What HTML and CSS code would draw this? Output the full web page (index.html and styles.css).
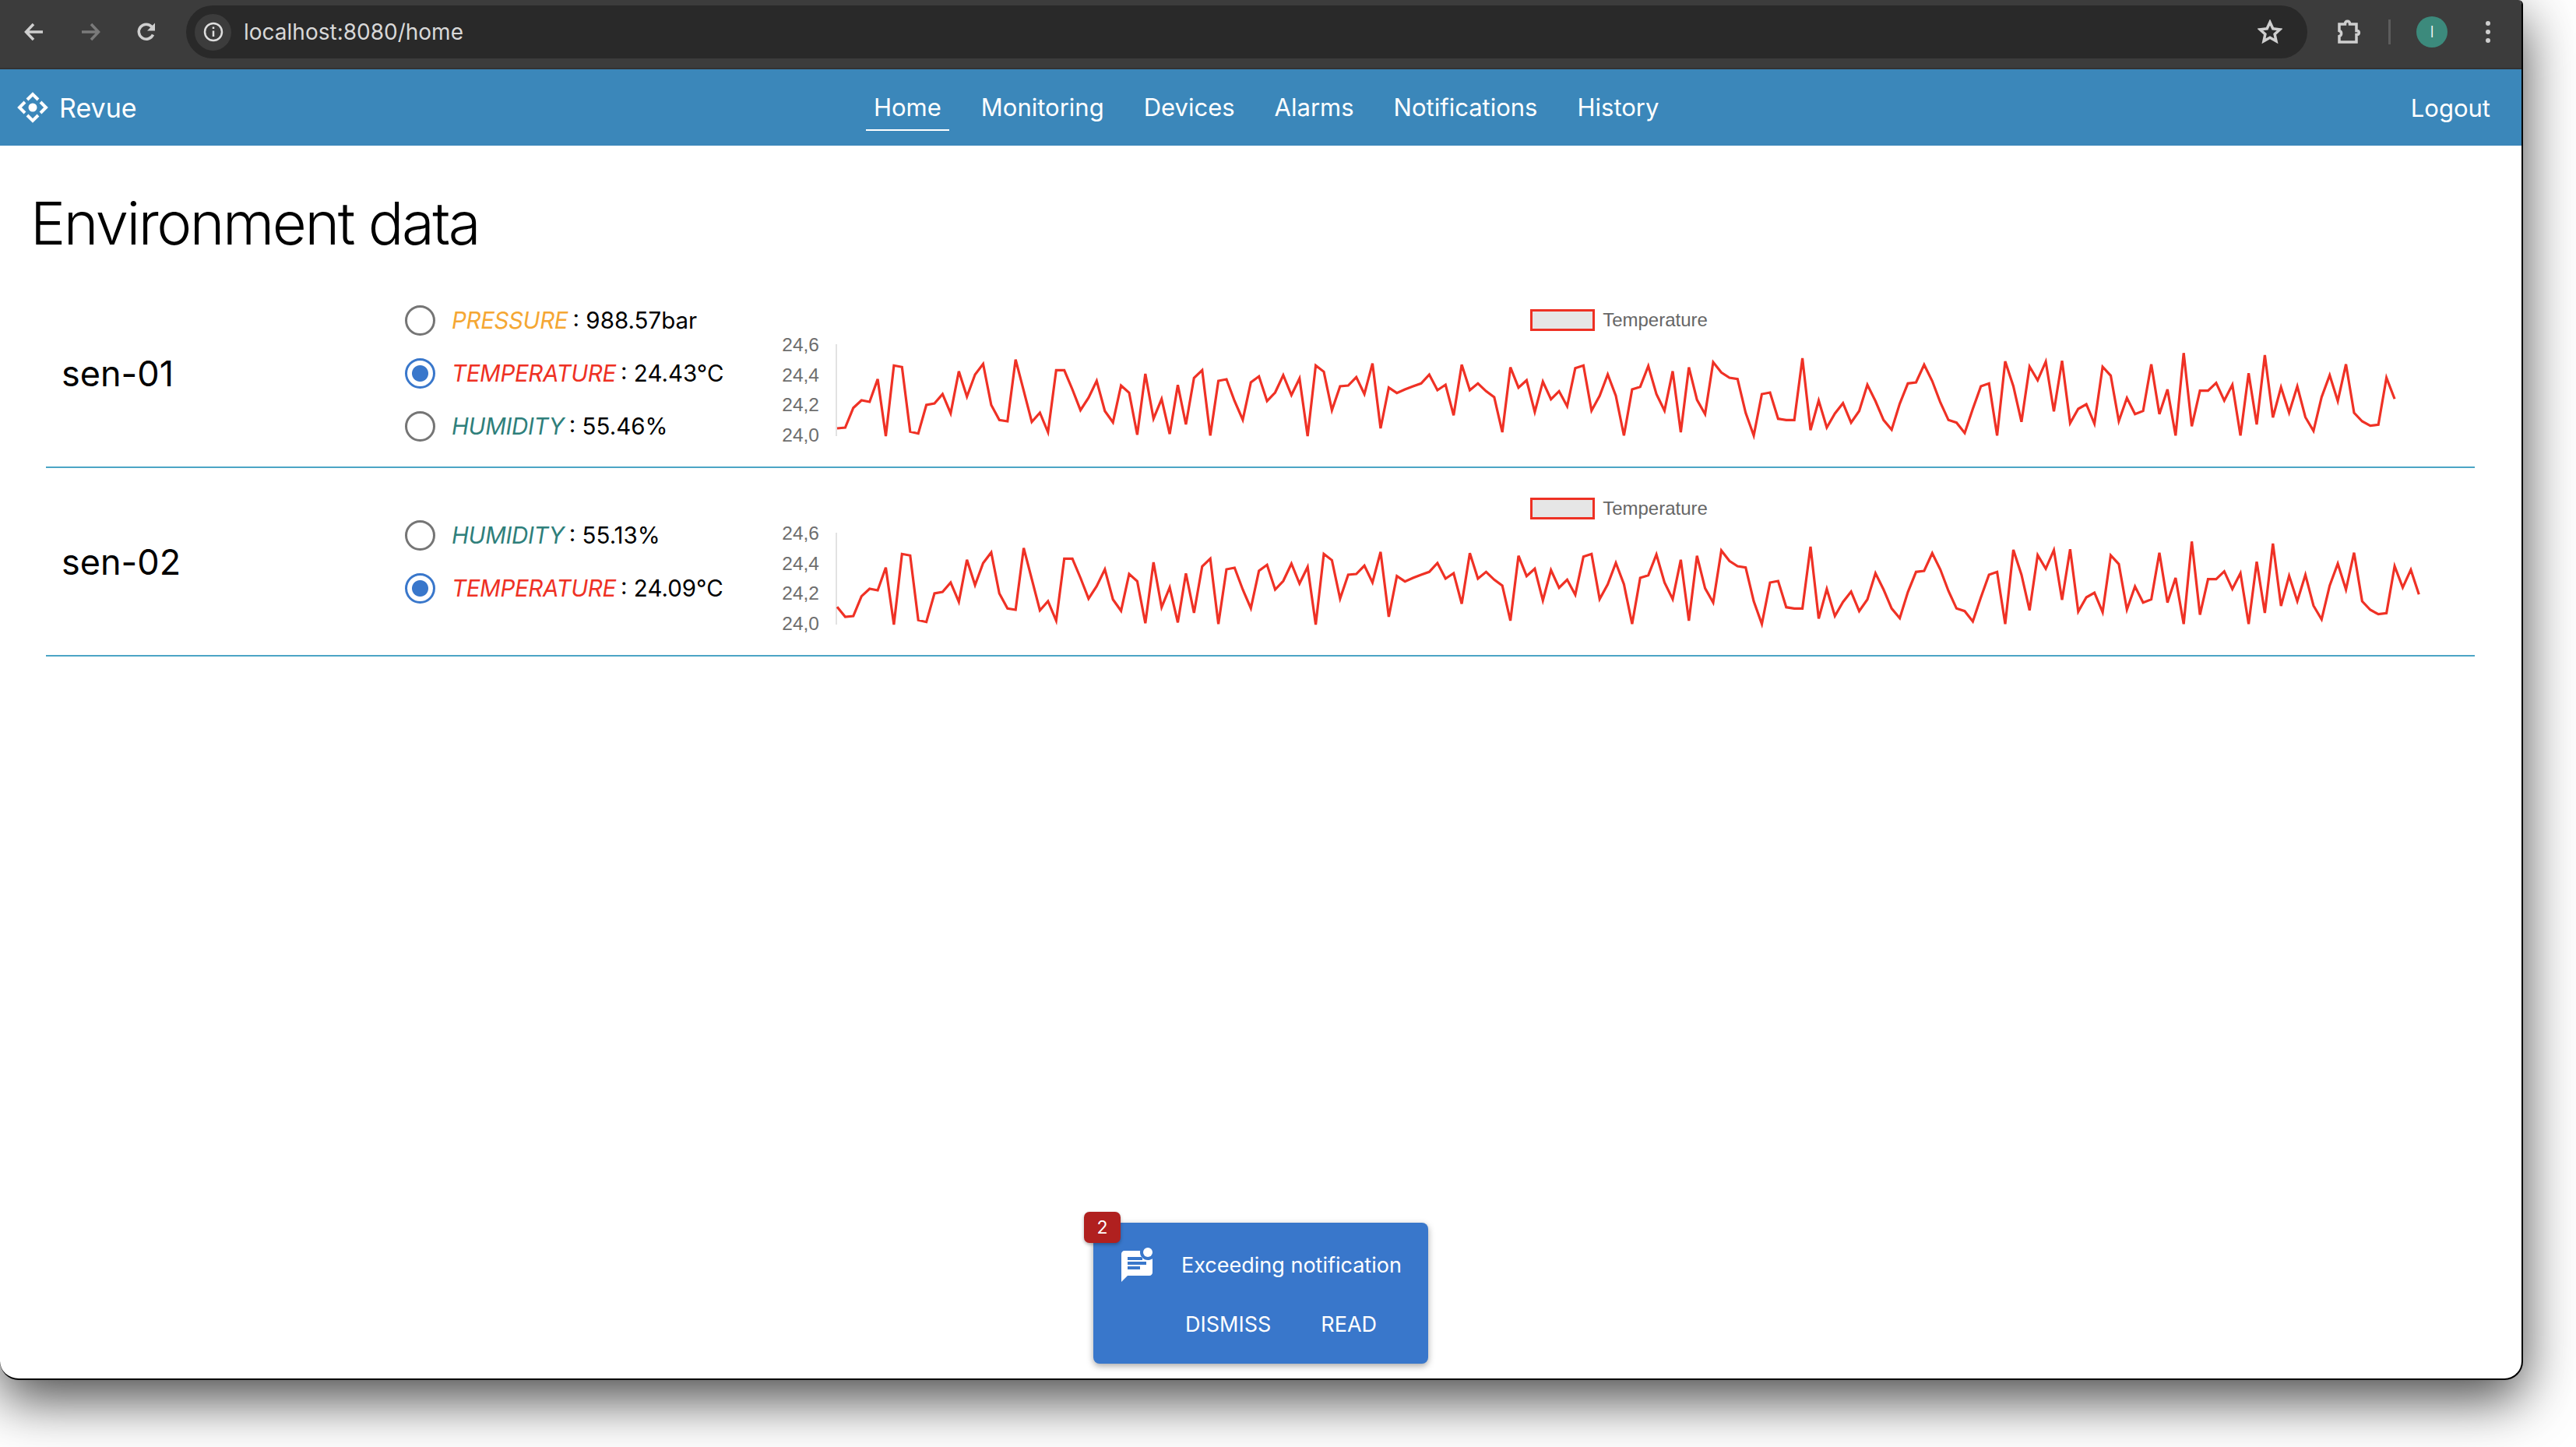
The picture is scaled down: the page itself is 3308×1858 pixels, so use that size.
FILE: index.html
```html
<!DOCTYPE html>
<html lang="en">
<head>
    <meta charset="UTF-8">
    <title>Revue</title>
    <link rel="stylesheet" href="styles.css">
</head>
<body>
    <div class="window">
        <div class="toolbar">
            <svg class="tool tool-back" viewBox="0 0 26 26"><path d="M24 13H3M12 3 2.500 13 12 23"/></svg>
            <svg class="tool tool-forward" viewBox="0 0 26 26"><path d="M2 13h21M14 3l9.500 10L14 23"/></svg>
            <svg class="tool tool-reload" viewBox="0 0 26 26"><path d="M21.500 16.500A9.500 9.500 0 1 1 20 6.500"/><path class="solid" d="M24 1.500v10h-10z"/></svg>
            <div class="address">
                <span class="site-info">
                    <svg viewBox="0 0 26 26"><circle cx="13" cy="13" r="11"/><path d="M13 11.500V19"/><path d="M13 6.500v2.500"/></svg>
                </span>
                <span class="url">localhost:8080/home</span>
                <svg class="tool tool-star" viewBox="0 0 32 32"><path d="M16 3.500l3.800 8.300 9 1-6.700 6.100 1.900 8.900-8-4.500-8 4.500 1.900-8.900-6.700-6.100 9-1z"/></svg>
            </div>
            <svg class="tool tool-puzzle" viewBox="0 0 34 34"><path d="M5 7h7.500c0-5 6-5 6 0H27v8.500c4.500 0 4.500 5 0 5V30H5v-7.500c3.500-1 3.500-6 0-7z"/></svg>
            <span class="tool-separator"></span>
            <span class="avatar">I</span>
            <span class="menu-dots"><i></i><i></i><i></i></span>
        </div>

        <nav class="navbar">
            <a class="brand">
                <svg viewBox="-20 -20 40 40">
                    <path d="M-7-10 0-17 7-10M10-7 17 0 10 7M7 10 0 17-7 10M-10 7-17 0-10-7"/>
                    <circle r="5.500"/>
                </svg>
                Revue
            </a>
            <div class="nav-links">
                <a class="nav-link active">Home</a>
                <a class="nav-link">Monitoring</a>
                <a class="nav-link">Devices</a>
                <a class="nav-link">Alarms</a>
                <a class="nav-link">Notifications</a>
                <a class="nav-link">History</a>
            </div>
            <a class="logout">Logout</a>
        </nav>

        <main class="content">
            <h1>Environment data</h1>

            <section class="device">
                <div class="device-name">sen-01</div>
                <div class="measures">
                    <div class="measure"><span class="radio"></span><em class="pressure">PRESSURE</em>&nbsp;: 988.57bar</div>
                    <div class="measure"><span class="radio checked"></span><em class="temperature">TEMPERATURE</em>&nbsp;: 24.43°C</div>
                    <div class="measure"><span class="radio"></span><em class="humidity">HUMIDITY</em>&nbsp;: 55.46%</div>
                </div>
                <div class="chart">
                    <div class="legend"><span class="legend-box"></span>Temperature</div>
                    <div class="plot">
                        <div class="y-axis"><span>24,6</span><span>24,4</span><span>24,2</span><span>24,0</span></div>
                        <div class="plot-area"><svg id="chart1"><polyline/></svg></div>
                    </div>
                </div>
            </section>

            <section class="device">
                <div class="device-name">sen-02</div>
                <div class="measures">
                    <div class="measure"><span class="radio"></span><em class="humidity">HUMIDITY</em>&nbsp;: 55.13%</div>
                    <div class="measure"><span class="radio checked"></span><em class="temperature">TEMPERATURE</em>&nbsp;: 24.09°C</div>
                </div>
                <div class="chart">
                    <div class="legend"><span class="legend-box"></span>Temperature</div>
                    <div class="plot">
                        <div class="y-axis"><span>24,6</span><span>24,4</span><span>24,2</span><span>24,0</span></div>
                        <div class="plot-area"><svg id="chart2"><polyline/></svg></div>
                    </div>
                </div>
            </section>
        </main>

        <div class="toast">
            <span class="toast-badge">2</span>
            <div class="toast-top">
                <svg class="toast-icon" viewBox="0 0 24 24">
                    <circle cx="19" cy="3" r="3"/>
                    <path fill-rule="evenodd" d="M4 2H14.100C14 2.300 14 2.700 14 3C14 5.800 16.200 8 19 8C20.100 8 21.100 7.700 22 7.100V16C22 17.100 21.100 18 20 18H6L2 22V4C2 2.900 2.900 2 4 2ZM6 6H15.500V8H6ZM6 9H18V11H6ZM6 12H14V14H6Z"/>
                </svg>
                <span class="toast-text">Exceeding notification</span>
            </div>
            <div class="toast-actions">
                <a>DISMISS</a>
                <a>READ</a>
            </div>
        </div>
    </div>

    <script src="charts.js"></script>
</body>
</html>
```

FILE: styles.css
```css
* {
    box-sizing: border-box;
}
body {
    margin: 0;
    height: 1858px;
    overflow: hidden;
    background: #fff;
    font-family: Inter, "Liberation Sans", sans-serif;
    color: #000;
}
.window {
    position: relative;
    width: 3240px;
    height: 1772px;
    background: #fff;
    border-right: 2px solid #000;
    border-bottom: 2px solid #000;
    border-radius: 0 6px 24px 24px;
    box-shadow: 0 24px 70px rgba(0, 0, 0, 0.72);
    overflow: hidden;
}

/* browser chrome */
.toolbar {
    display: flex;
    align-items: center;
    height: 89px;
    padding: 0 0 5px 31px;
    background: #3c3c3c;
    border-bottom: 2px solid #333;
}
.tool {
    flex: none;
    fill: none;
    stroke: #cfcfcf;
    stroke-width: 3.500;
}
.tool .solid {
    fill: #cfcfcf;
    stroke: none;
}
.tool-back {
    width: 26px;
    height: 26px;
}
.tool-forward {
    width: 26px;
    height: 26px;
    margin-left: 46px;
    stroke: #7a7a7a;
}
.tool-reload {
    width: 26px;
    height: 26px;
    margin-left: 46px;
}
.address {
    display: flex;
    align-items: center;
    width: 2724px;
    height: 68px;
    margin-left: 38px;
    padding: 0 32px 0 11px;
    background: #292929;
    border-radius: 34px;
}
.site-info {
    display: flex;
    align-items: center;
    justify-content: center;
    width: 47px;
    height: 47px;
    background: #3c3c3c;
    border-radius: 50%;
}
.site-info svg {
    width: 26px;
    height: 26px;
    fill: none;
    stroke: #dedede;
    stroke-width: 2.500;
}
.url {
    margin-left: 16px;
    font-size: 28px;
    color: #d8d8d8;
}
.tool-star {
    width: 32px;
    height: 32px;
    margin-left: auto;
}
.tool-puzzle {
    width: 34px;
    height: 34px;
    margin-left: 36px;
}
.tool-separator {
    width: 3px;
    height: 32px;
    margin-left: 34px;
    background: #5c5c5c;
}
.avatar {
    display: flex;
    align-items: center;
    justify-content: center;
    width: 40px;
    height: 40px;
    margin-left: 33px;
    border-radius: 50%;
    background: #3c8a7c;
    color: #fff;
    font-size: 20px;
    font-weight: 300;
}
.menu-dots {
    display: flex;
    flex-direction: column;
    gap: 5px;
    margin-left: 49px;
}
.menu-dots i {
    width: 6px;
    height: 6px;
    border-radius: 50%;
    background: #cfcfcf;
}

/* app navbar */
.navbar {
    display: flex;
    align-items: center;
    justify-content: space-between;
    height: 98px;
    padding: 0 40px 0 24px;
    background: #3b87ba;
    color: #fff;
    font-size: 31px;
    font-weight: 400;
}
.brand {
    display: flex;
    align-items: center;
    gap: 14px;
    font-size: 34px;
}
.brand svg {
    width: 40px;
    height: 40px;
    margin-left: -2px;
    fill: #fff;
}
.brand path {
    fill: none;
    stroke: #fff;
    stroke-width: 4;
}
.nav-links {
    display: flex;
    gap: 31px;
    margin-right: 19px;
}
.nav-link {
    padding: 10px;
    border-bottom: 2px solid transparent;
}
.nav-link.active {
    border-bottom-color: #fff;
}

/* page content */
.content {
    padding: 0 60px 0 59px;
}
h1 {
    margin: 0;
    height: 172px;
    padding-top: 53px;
    margin-left: -20px;
    font-size: 76px;
    line-height: 92px;
    font-weight: 300;
    letter-spacing: -2.500px;
}
.device {
    display: flex;
    align-items: center;
    height: 242px;
    padding-left: 20px;
    border-bottom: 2px solid #4ba5c5;
}
.device-name {
    width: 441px;
    font-size: 45px;
}
.measures {
    display: flex;
    flex-direction: column;
    gap: 29px;
    width: 480px;
}
.measure {
    display: flex;
    align-items: center;
    height: 39px;
    font-size: 29.500px;
}
.measure em {
    margin: 0 -2px 0 21px;
    font-weight: 400;
    letter-spacing: -0.350px;
}
.pressure {
    color: #f5a733;
}
.temperature {
    color: #ee3124;
}
.humidity {
    color: #2f7f7b;
}
.radio {
    flex: none;
    width: 39px;
    height: 39px;
    border: 3.500px solid #757575;
    border-radius: 50%;
}
.radio.checked {
    border-color: #3977cb;
    background: radial-gradient(circle, #3977cb 10px, transparent 11px);
}

/* charts */
.chart {
    align-self: flex-start;
    width: 2158px;
    margin-top: 38px;
}
.legend {
    display: flex;
    align-items: center;
    justify-content: center;
    gap: 10px;
    height: 28px;
    font-family: "Liberation Sans", sans-serif;
    font-size: 24px;
    color: #666;
}
.legend-box {
    width: 83px;
    height: 28px;
    background: #e6e6e6;
    border: 3px solid #ee3124;
}
.plot {
    display: flex;
    height: 118px;
    margin-top: 17px;
}
.y-axis {
    display: flex;
    flex-direction: column;
    justify-content: space-between;
    width: 52px;
    height: 144px;
    margin-top: -13px;
    font-family: "Liberation Sans", sans-serif;
    font-size: 24.500px;
    line-height: 28px;
    text-align: right;
    color: #6e6e6e;
}
.plot-area {
    flex: 1;
    margin-left: 21px;
    border-left: 2px solid #e2e2e2;
}
.plot-area svg {
    display: block;
    width: 100%;
    height: 118px;
    overflow: visible;
}
.plot-area polyline {
    fill: none;
    stroke: #ef3125;
    stroke-width: 3.200;
}

/* notification */
.toast {
    position: absolute;
    left: 1404px;
    top: 1570px;
    width: 430px;
    height: 181px;
    padding: 32px 0 0 32px;
    background: #3977cb;
    border-radius: 8px;
    box-shadow: 0 3px 8px rgba(0, 0, 0, 0.35);
    color: #fff;
    font-size: 27px;
}
.toast-badge {
    position: absolute;
    left: -12px;
    top: -14px;
    display: flex;
    align-items: center;
    justify-content: center;
    width: 47px;
    height: 40px;
    background: #b0201f;
    border-radius: 7px;
    box-shadow: 0 2px 4px rgba(0, 0, 0, 0.3);
    font-size: 23px;
}
.toast-top {
    display: flex;
    align-items: flex-start;
    gap: 33px;
}
.toast-icon {
    flex: none;
    width: 48px;
    height: 48px;
    fill: #fff;
}
.toast-text {
    margin-top: 6px;
    line-height: 34px;
}
.toast-actions {
    display: flex;
    gap: 64px;
    margin: 34px 0 0 86px;
    line-height: 34px;
}
```

FILE: charts.js
```js
// y of each sample, in thirds of a pixel from 22px above the plot top
const trace = [
    390, 387, 311, 282, 288, 200, 420, 148, 154, 403, 410, 300, 294, 258, 332, 170, 268, 183, 142, 300,
    358, 363, 125, 245, 365, 330, 405, 166, 166, 240, 320, 272, 207, 323, 367, 225, 253, 415, 180, 353,
    277, 412, 223, 375, 196, 166, 418, 207, 201, 285, 357, 213, 190, 285, 252, 185, 262, 198, 420, 148,
    172, 320, 228, 225, 193, 258, 140, 390, 233, 254, 240, 228, 217, 183, 243, 222, 340, 145, 243, 217,
    247, 270, 405, 155, 233, 205, 327, 210, 278, 247, 305, 158, 148, 322, 265, 182, 265, 418, 240, 230,
    150, 258, 322, 170, 405, 155, 280, 335, 135, 175, 195, 200, 330, 418, 258, 252, 353, 358, 358, 120,
    397, 283, 387, 333, 293, 368, 323, 222, 285, 358, 395, 295, 217, 213, 145, 208, 290, 358, 368, 408,
    315, 228, 217, 418, 132, 228, 365, 152, 205, 133, 325, 130, 370, 315, 297, 372, 153, 187, 362, 273,
    335, 323, 143, 335, 240, 418, 100, 382, 245, 245, 215, 283, 222, 418, 178, 375, 108, 348, 232, 330,
    228, 347, 400, 270, 185, 285, 143, 330, 363, 380, 376, 195, 277
];

function drawChart(id, samples) {
    const points = samples.map(function (v, i) {
        return (i * 10.417).toFixed(1) + ',' + ((v - 66) / 3).toFixed(1);
    });
    document.querySelector('#' + id + ' polyline').setAttribute('points', points.join(' '));
}

drawChart('chart1', trace);
drawChart('chart2', [352].concat(trace, [209, 304]));
```
